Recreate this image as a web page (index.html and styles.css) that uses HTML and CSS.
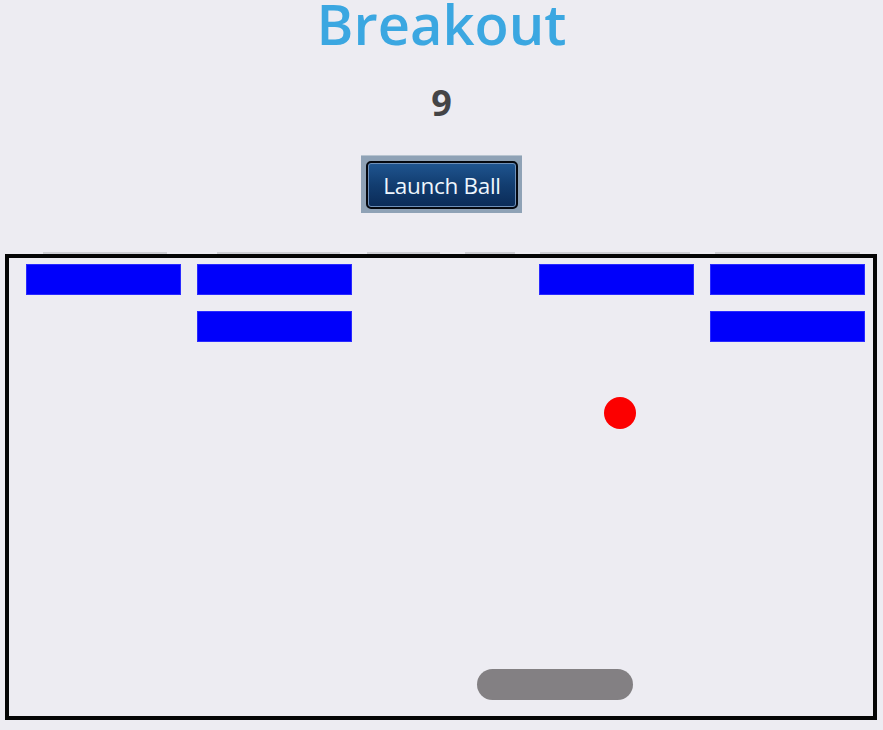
FILE: index.html
```html
<!DOCTYPE html>
<html>
<head>
<meta charset="utf-8">
<link rel="stylesheet" href="styles.css">
</head>
<body>
<div class="page">
  <header class="header">
    <h1 class="title">Breakout</h1>
    <div class="score">9</div>
    <div class="btn-frame"><button class="launch">Launch Ball</button></div>
  </header>
  <div class="ghosts">
    <span class="ghost g1"></span><span class="ghost g2"></span><span class="ghost g3"></span><span class="ghost g4"></span><span class="ghost g5"></span><span class="ghost g6"></span>
  </div>
  <div class="board">
    <div class="bricks">
      <div class="brick"></div><div class="brick"></div><div class="empty"></div><div class="brick"></div><div class="brick"></div>
      <div class="empty"></div><div class="brick"></div><div class="empty"></div><div class="empty"></div><div class="brick"></div>
    </div>
    <div class="ball"></div>
    <div class="paddle"></div>
  </div>
</div>
</body>
</html>
```
FILE: styles.css
```css
html, body {
  margin: 0;
  padding: 0;
  background: #edecf2;
}
.page {
  width: 883px;
  height: 730px;
  overflow: hidden;
  font-family: "Open Sans", "Noto Sans", sans-serif;
}
.header {
  display: flex;
  flex-direction: column;
  align-items: center;
}
.title {
  margin: 0;
  font-size: 56px;
  line-height: 47px;
  font-weight: 600;
  color: #3ba7e1;
}
.score {
  margin-top: 38px;
  font-size: 36px;
  line-height: 36px;
  font-weight: 700;
  color: #444446;
}
.btn-frame {
  margin-top: 34px;
  padding: 5px 4px 4px 5px;
  background: #8fa2b6;
  border-top: 1px solid #b8c4d0;
  display: flex;
}
.launch {
  width: 152px;
  height: 48px;
  border: 2px solid #05080f;
  border-radius: 5px;
  background: linear-gradient(#1f5590, #123d70 50%, #0b2b57);
  box-shadow: inset 0 0 0 1px #6f90b8;
  color: #eef6fd;
  font-family: "Open Sans", "Noto Sans", sans-serif;
  font-size: 22.5px;
  letter-spacing: -0.3px;
  padding: 0;
  cursor: pointer;
}
.ghosts {
  display: flex;
  height: 2px;
  margin-top: 39px;
}
.ghost {
  height: 2px;
  background: #cfcfd4;
}
.g1 { margin-left: 43px; width: 124px; }
.g2 { margin-left: 50px; width: 123px; }
.g3 { margin-left: 27px; width: 73px; }
.g4 { margin-left: 25px; width: 50px; }
.g5 { margin-left: 25px; width: 150px; }
.g6 { margin-left: 25px; width: 145px; }
.board {
  position: relative;
  box-sizing: border-box;
  margin-left: 5px;
  width: 872px;
  height: 466px;
  border: 4px solid #050505;
}
.bricks {
  display: grid;
  grid-template-columns: repeat(5, 155px);
  grid-auto-rows: 31px;
  column-gap: 16px;
  row-gap: 16px;
  padding: 6px 0 0 17px;
}
.brick {
  background: #0000fb;
  box-shadow: inset 0 0 0 1px #2a2aff;
}
.ball {
  position: absolute;
  left: 595px;
  top: 139px;
  width: 32px;
  height: 32px;
  border-radius: 50%;
  background: #fc0000;
}
.paddle {
  position: absolute;
  left: 468px;
  top: 411px;
  width: 156px;
  height: 31px;
  border-radius: 16px;
  background: #838083;
}
```
